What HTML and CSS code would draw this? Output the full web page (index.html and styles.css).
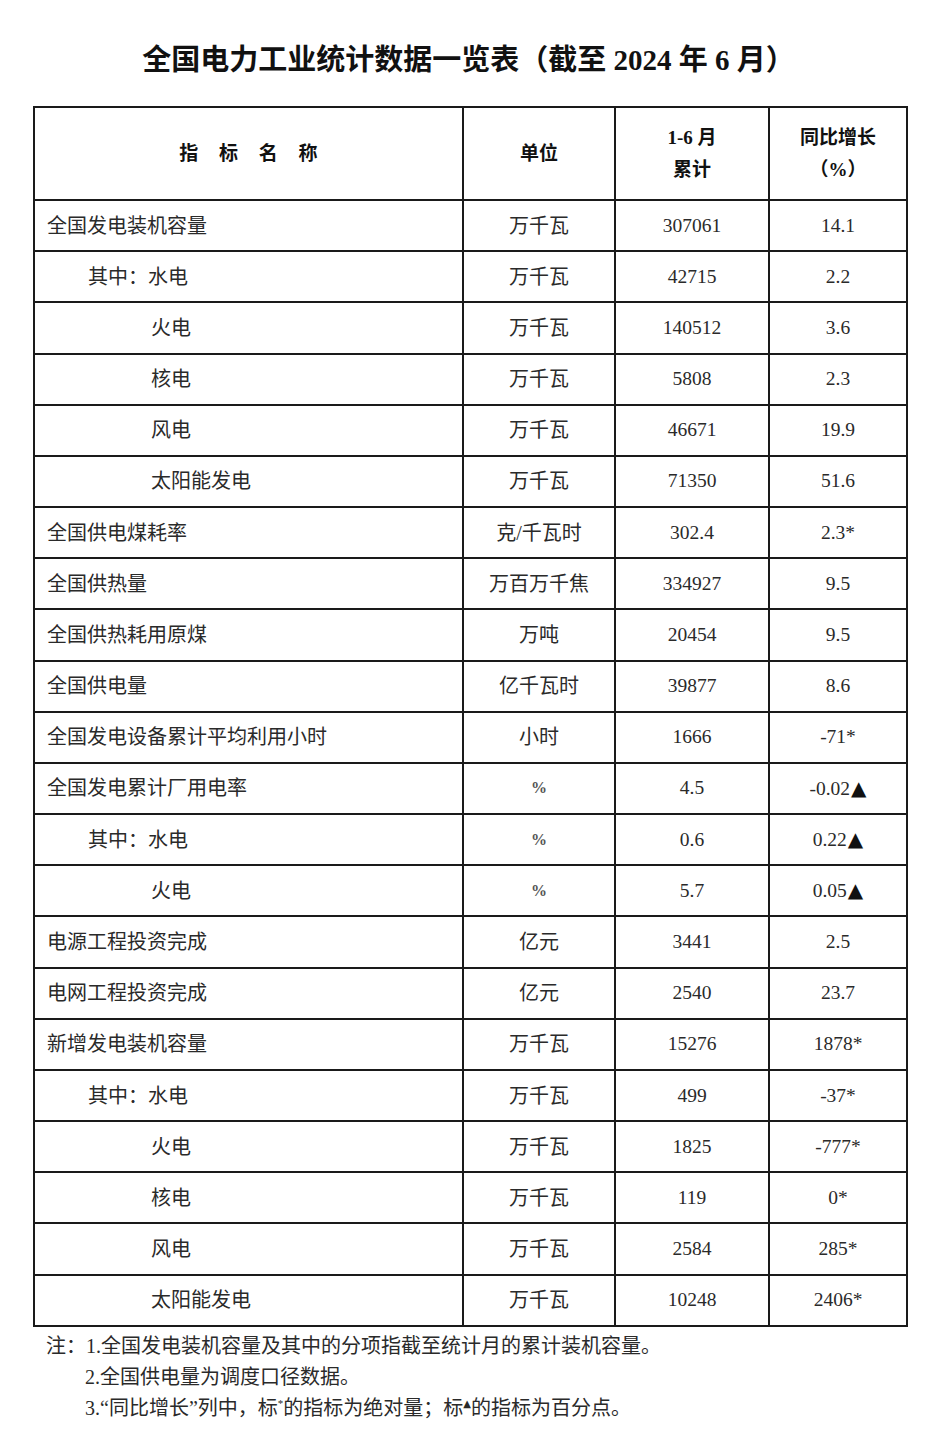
FILE: index.html
```html
<!DOCTYPE html>
<html lang="zh-CN">
<head>
<meta charset="utf-8">
<title>全国电力工业统计数据一览表</title>
<link rel="stylesheet" href="styles.css">
</head>
<body>
<div class="page">
  <h1 class="title">全国电力工业统计数据一览表（截至 2024 年 6 月）</h1>
  <table class="stats">
    <colgroup>
      <col class="c-name"><col class="c-unit"><col class="c-val"><col class="c-yoy">
    </colgroup>
    <thead>
      <tr class="head">
        <th class="spaced">指 标 名 称</th>
        <th>单位</th>
        <th>1-6 月<br>累计</th>
        <th>同比增长<br>（%）</th>
      </tr>
    </thead>
    <tbody>
      <tr><td class="name">全国发电装机容量</td><td>万千瓦</td><td class="num">307061</td><td class="num">14.1</td></tr>
      <tr><td class="name sub1">其中：水电</td><td>万千瓦</td><td class="num">42715</td><td class="num">2.2</td></tr>
      <tr><td class="name sub2">火电</td><td>万千瓦</td><td class="num">140512</td><td class="num">3.6</td></tr>
      <tr><td class="name sub2">核电</td><td>万千瓦</td><td class="num">5808</td><td class="num">2.3</td></tr>
      <tr><td class="name sub2">风电</td><td>万千瓦</td><td class="num">46671</td><td class="num">19.9</td></tr>
      <tr><td class="name sub2">太阳能发电</td><td>万千瓦</td><td class="num">71350</td><td class="num">51.6</td></tr>
      <tr><td class="name">全国供电煤耗率</td><td>克/千瓦时</td><td class="num">302.4</td><td class="num">2.3*</td></tr>
      <tr><td class="name">全国供热量</td><td>万百万千焦</td><td class="num">334927</td><td class="num">9.5</td></tr>
      <tr><td class="name">全国供热耗用原煤</td><td>万吨</td><td class="num">20454</td><td class="num">9.5</td></tr>
      <tr><td class="name">全国供电量</td><td>亿千瓦时</td><td class="num">39877</td><td class="num">8.6</td></tr>
      <tr><td class="name">全国发电设备累计平均利用小时</td><td>小时</td><td class="num">1666</td><td class="num">-71*</td></tr>
      <tr><td class="name">全国发电累计厂用电率</td><td class="pct">%</td><td class="num">4.5</td><td class="num">-0.02<span class="tri">▲</span></td></tr>
      <tr><td class="name sub1">其中：水电</td><td class="pct">%</td><td class="num">0.6</td><td class="num">0.22<span class="tri">▲</span></td></tr>
      <tr><td class="name sub2">火电</td><td class="pct">%</td><td class="num">5.7</td><td class="num">0.05<span class="tri">▲</span></td></tr>
      <tr><td class="name">电源工程投资完成</td><td>亿元</td><td class="num">3441</td><td class="num">2.5</td></tr>
      <tr><td class="name">电网工程投资完成</td><td>亿元</td><td class="num">2540</td><td class="num">23.7</td></tr>
      <tr><td class="name">新增发电装机容量</td><td>万千瓦</td><td class="num">15276</td><td class="num">1878*</td></tr>
      <tr><td class="name sub1">其中：水电</td><td>万千瓦</td><td class="num">499</td><td class="num">-37*</td></tr>
      <tr><td class="name sub2">火电</td><td>万千瓦</td><td class="num">1825</td><td class="num">-777*</td></tr>
      <tr><td class="name sub2">核电</td><td>万千瓦</td><td class="num">119</td><td class="num">0*</td></tr>
      <tr><td class="name sub2">风电</td><td>万千瓦</td><td class="num">2584</td><td class="num">285*</td></tr>
      <tr><td class="name sub2">太阳能发电</td><td>万千瓦</td><td class="num">10248</td><td class="num">2406*</td></tr>
    </tbody>
  </table>
  <div class="notes">
    <p class="note-first">注：1.全国发电装机容量及其中的分项指截至统计月的累计装机容量。</p>
    <p class="note">2.全国供电量为调度口径数据。</p>
    <p class="note">3.“同比增长”列中，标<sup class="mark">*</sup>的指标为绝对量；标<sup class="mark tri-s">▲</sup>的指标为百分点。</p>
  </div>
</div>
</body>
</html>
```

FILE: styles.css
```css
html, body {
  margin: 0;
  padding: 0;
  background: #ffffff;
}

body {
  font-family: "Liberation Serif", "Noto Sans CJK SC", serif;
  color: #222;
}

.page {
  width: 937px;
  padding-top: 40px;
}

.title {
  margin: 0 0 26px 0;
  height: 40px;
  line-height: 40px;
  font-size: 29px;
  font-weight: 700;
  text-align: center;
  color: #111;
  font-family: "Liberation Serif", "Noto Sans CJK SC", serif;
}

.stats {
  margin-left: 33px;
  width: 873px;
  border-collapse: collapse;
  table-layout: fixed;
  border: 2.5px solid #1a1a1a;
}

.c-name { width: 429px; }
.c-unit { width: 152px; }
.c-val { width: 154px; }
.c-yoy { width: 138px; }

.stats th,
.stats td {
  border: 2px solid #1a1a1a;
  padding: 0;
  text-align: center;
  vertical-align: middle;
}

.stats th {
  height: 91px;
  font-size: 19px;
  font-weight: 700;
  line-height: 32px;
  color: #111;
}

.stats th.spaced {
  word-spacing: 16px;
}

.stats td {
  height: 49.18px;
  font-size: 20px;
  line-height: 24px;
  color: #2a2a2a;
}

.stats td.name {
  text-align: left;
  padding-left: 12px;
}

.stats td.sub1 {
  padding-left: 53px;
}

.stats td.sub2 {
  padding-left: 116px;
}

.stats td.num {
  font-size: 19.5px;
}

.stats td.pct {
  font-size: 16px;
  font-weight: 700;
  color: #555;
}

.tri {
  font-family: "DejaVu Sans", sans-serif;
  font-size: 20px;
  color: #111;
  margin-left: 1px;
}

.notes {
  padding-top: 4px;
}

.notes p {
  margin: 0;
  font-size: 20px;
  line-height: 31px;
  color: #2a2a2a;
}

.note-first {
  padding-left: 46px;
}

.note {
  padding-left: 85px;
}

.mark {
  font-size: 11px;
  vertical-align: 8px;
  line-height: 0;
}

.tri-s {
  font-family: "DejaVu Sans", sans-serif;
  font-size: 10px;
}
```
